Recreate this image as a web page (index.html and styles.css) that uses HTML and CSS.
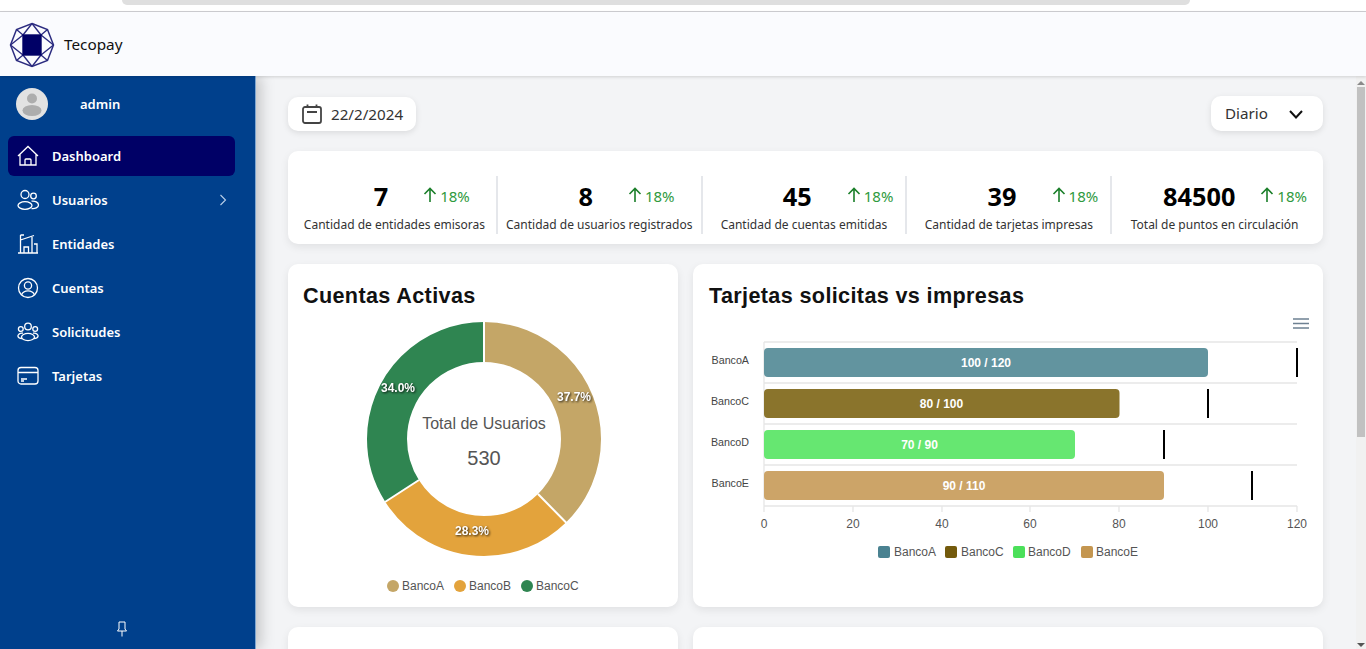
FILE: index.html
```html
<!DOCTYPE html>
<html lang="en">
<head>
  <meta charset="UTF-8" />
  <meta name="viewport" content="width=device-width, initial-scale=1.0" />
  <title>Tecopay</title>
  <link rel="stylesheet" href="styles.css">
</head>
<body>
  <div class="tabstrip"><div class="tabstrip-pill"></div></div>

  <header class="topbar">
    <svg class="logo" viewBox="0 0 46 46" fill="none" stroke="#2c2c80" stroke-width="1.4">
      <polygon points="23,1.5 38.5,7.5 44.5,23 38.5,38.5 23,44.5 7.5,38.5 1.5,23 7.5,7.5" stroke-width="1.5"/>
      <path d="M23 1.5 L14 13 M23 1.5 L32 13 M38.5 7.5 L32 13 M44.5 23 L32 13 M44.5 23 L32 33 M38.5 38.5 L32 33 M23 44.5 L32 33 M23 44.5 L14 33 M7.5 38.5 L14 33 M1.5 23 L14 33 M1.5 23 L14 13 M7.5 7.5 L14 13"/>
      <rect x="14" y="13" width="18" height="20" fill="#000066" stroke="#000066"/>
    </svg>
    <span class="brand">Tecopay</span>
  </header>

  <div class="layout">
    <aside class="sidebar">
      <div class="user">
        <svg class="avatar" viewBox="0 0 32 32">
          <circle cx="16" cy="16" r="16" fill="#e2e2e2"/>
          <circle cx="16" cy="10.5" r="5" fill="#adadad"/>
          <ellipse cx="16" cy="22.5" rx="9.5" ry="5.5" fill="#adadad"/>
        </svg>
        <span class="user-name">admin</span>
      </div>

      <nav class="nav">
        <a class="nav-item active" href="#">
          <svg class="nav-icon" viewBox="0 0 24 24"><path d="M2 12 L12 2.5 L22 12 M4 10 V21 H20 V10 M9 21 V16 Q9 15 10 15 H14 Q15 15 15 16 V21"/></svg>
          Dashboard
        </a>
        <a class="nav-item" href="#">
          <svg class="nav-icon" viewBox="0 0 24 24"><circle cx="9" cy="6.5" r="4"/><circle cx="17.5" cy="8" r="2.8"/><ellipse cx="9" cy="17.5" rx="7" ry="3.8"/><path d="M15.5 13.2 C19 12.5 22.5 14.5 22.5 17 C22.5 19.5 19 21 15.5 20.5"/></svg>
          Usuarios
          <svg class="nav-caret" viewBox="0 0 8 12"><path d="M1.5 1 L6.5 6 L1.5 11"/></svg>
        </a>
        <a class="nav-item" href="#">
          <svg class="nav-icon" viewBox="0 0 24 24"><path d="M2 21 H22 M4.5 21 V3 M4.5 3 H8 M4.5 8 L18 3.5 M16 5 V21 M8 21 V15 H12.5 V21 M18 12 H21 V21"/></svg>
          Entidades
        </a>
        <a class="nav-item" href="#">
          <svg class="nav-icon" viewBox="0 0 24 24"><circle cx="12" cy="12" r="9.5"/><circle cx="12" cy="9.5" r="3.6"/><path d="M5.5 19 Q7 14.8 12 14.8 Q17 14.8 18.5 19"/></svg>
          Cuentas
        </a>
        <a class="nav-item" href="#">
          <svg class="nav-icon" viewBox="0 0 24 24"><circle cx="12" cy="6.5" r="3.3"/><circle cx="4.8" cy="9" r="2.4"/><circle cx="19.2" cy="9" r="2.4"/><ellipse cx="12" cy="17" rx="6.5" ry="3.6"/><path d="M7 13.2 C3 12.8 1.5 15 2 16.5 C2.5 18 4 18.5 6 18.5 M17 13.2 C21 12.8 22.5 15 22 16.5 C21.5 18 20 18.5 18 18.5"/></svg>
          Solicitudes
        </a>
        <a class="nav-item" href="#">
          <svg class="nav-icon" viewBox="0 0 24 24"><rect x="2" y="3.5" width="20" height="16.5" rx="3"/><path d="M2 8.5 H22 M5 15 H11 M5 17 H8"/></svg>
          Tarjetas
        </a>
      </nav>

      <div class="pin">
        <svg viewBox="0 0 12 16" width="12" height="16" fill="none" stroke="#fff" stroke-width="1"><path d="M3 1 H9 V8 L10.5 10 H1.5 L3 8 Z M6 10 V15.5"/></svg>
      </div>
    </aside>

    <main class="main">
      <div class="toolbar">
        <div class="chip chip-date">
          <svg class="date-icon" viewBox="0 0 20 20" fill="none" stroke="#444" stroke-width="1.8"><rect x="1" y="3" width="18" height="16" rx="2"/><path d="M5.5 0.5 V4 M14.5 0.5 V4 M5 8 H15"/></svg>
          22/2/2024
        </div>
        <div class="chip chip-select">
          <span class="select-text">Diario</span>
          <svg class="select-icon" viewBox="0 0 14 9" fill="none" stroke="#111" stroke-width="2"><path d="M1 1 L7 7.5 L13 1"/></svg>
        </div>
      </div>

      <section class="card stats">
        <div class="stat">
          <div class="stat-row"><span class="stat-value">7</span><span class="delta"><svg class="delta-icon" viewBox="0 0 14 16"><path d="M7 15 V1.5 M1.5 7 L7 1.5 L12.5 7"/></svg>18%</span></div>
          <div class="stat-label">Cantidad de entidades emisoras</div>
        </div>
        <div class="stat">
          <div class="stat-row"><span class="stat-value">8</span><span class="delta"><svg class="delta-icon" viewBox="0 0 14 16"><path d="M7 15 V1.5 M1.5 7 L7 1.5 L12.5 7"/></svg>18%</span></div>
          <div class="stat-label">Cantidad de usuarios registrados</div>
        </div>
        <div class="stat stat-mid">
          <div class="stat-row"><span class="stat-value">45</span><span class="delta"><svg class="delta-icon" viewBox="0 0 14 16"><path d="M7 15 V1.5 M1.5 7 L7 1.5 L12.5 7"/></svg>18%</span></div>
          <div class="stat-label">Cantidad de cuentas emitidas</div>
        </div>
        <div class="stat stat-mid">
          <div class="stat-row"><span class="stat-value">39</span><span class="delta"><svg class="delta-icon" viewBox="0 0 14 16"><path d="M7 15 V1.5 M1.5 7 L7 1.5 L12.5 7"/></svg>18%</span></div>
          <div class="stat-label">Cantidad de tarjetas impresas</div>
        </div>
        <div class="stat stat-last">
          <div class="stat-row"><span class="stat-value">84500</span><span class="delta"><svg class="delta-icon" viewBox="0 0 14 16"><path d="M7 15 V1.5 M1.5 7 L7 1.5 L12.5 7"/></svg>18%</span></div>
          <div class="stat-label">Total de puntos en circulación</div>
        </div>
      </section>

      <section class="cards">
        <div class="card chart-card">
          <h2 class="chart-title">Cuentas Activas</h2>
          <svg class="chart" viewBox="0 0 390 299" width="390" height="299">
            <g fill="none" stroke-width="40" transform="rotate(-90 196 131)">
              <circle cx="196" cy="131" r="97" pathLength="100" stroke="#c4a667" stroke-dasharray="37.7 62.3"/>
              <circle cx="196" cy="131" r="97" pathLength="100" stroke="#e3a33c" stroke-dasharray="28.3 71.7" stroke-dashoffset="-37.7"/>
              <circle cx="196" cy="131" r="97" pathLength="100" stroke="#2f8551" stroke-dasharray="34 66" stroke-dashoffset="-66"/>
            </g>
            <path d="M196 14 V54 M250 186 L278.5 215 M131 172 L97 194" stroke="#fff" stroke-width="2"/>
            <g class="donut-label">
              <text x="286" y="93">37.7%</text>
              <text x="184" y="227">28.3%</text>
              <text x="110" y="84">34.0%</text>
            </g>
            <text class="donut-title" x="196" y="121">Total de Usuarios</text>
            <text class="donut-total" x="196" y="157">530</text>
            <circle cx="105" cy="278" r="6" fill="#c4a667"/>
            <text class="legend" x="114" y="282">BancoA</text>
            <circle cx="172" cy="278" r="6" fill="#e3a33c"/>
            <text class="legend" x="181" y="282">BancoB</text>
            <circle cx="239" cy="278" r="6" fill="#2f8551"/>
            <text class="legend" x="248" y="282">BancoC</text>
          </svg>
        </div>

        <div class="card chart-card">
          <h2 class="chart-title chart-title-wide">Tarjetas solicitas vs impresas</h2>
          <svg class="chart" viewBox="0 0 630 299" width="630" height="299">
            <path d="M600 11 H616 M600 15.5 H616 M600 20 H616" stroke="#6e8192" stroke-width="1.6"/>
            <path d="M71 34 H604 M71 75 H604 M71 116 H604 M71 157 H604 M71 198 H604 M71 34 V204 M160 198 V204 M249 198 V204 M337 198 V204 M426 198 V204 M515 198 V204 M604 198 V204" stroke="#e6e6e6" stroke-width="1.3" fill="none"/>
            <rect x="71" y="40" width="444" height="29" rx="4" fill="#62949f"/>
            <rect x="71" y="81" width="355.5" height="29" rx="4" fill="#8a742c"/>
            <rect x="71" y="122" width="311" height="29" rx="4" fill="#66e771"/>
            <rect x="71" y="163" width="400" height="29" rx="4" fill="#cca468"/>
            <path d="M604 40 V69 M515 81 V110 M471 122 V151 M559 163 V192" stroke="#000" stroke-width="2"/>
            <g class="bar-label">
              <text x="293" y="59">100 / 120</text>
              <text x="248.5" y="100">80 / 100</text>
              <text x="226.5" y="141">70 / 90</text>
              <text x="271" y="182">90 / 110</text>
            </g>
            <g class="bar-cat">
              <text x="56" y="56">BancoA</text>
              <text x="56" y="97">BancoC</text>
              <text x="56" y="138">BancoD</text>
              <text x="56" y="179">BancoE</text>
            </g>
            <g class="bar-tick">
              <text x="71" y="220">0</text>
              <text x="160" y="220">20</text>
              <text x="249" y="220">40</text>
              <text x="337" y="220">60</text>
              <text x="426" y="220">80</text>
              <text x="515" y="220">100</text>
              <text x="604" y="220">120</text>
            </g>
            <rect x="185" y="238" width="12" height="12" rx="2" fill="#4a8291"/>
            <text class="legend" x="201" y="248">BancoA</text>
            <rect x="252" y="238" width="12" height="12" rx="2" fill="#735a0c"/>
            <text class="legend" x="268" y="248">BancoC</text>
            <rect x="320" y="238" width="12" height="12" rx="2" fill="#4be05a"/>
            <text class="legend" x="335" y="248">BancoD</text>
            <rect x="388" y="238" width="12" height="12" rx="2" fill="#c49650"/>
            <text class="legend" x="403" y="248">BancoE</text>
          </svg>
        </div>

        <div class="card card-empty"></div>
        <div class="card card-empty"></div>
      </section>
    </main>

    <div class="scrollbar">
      <div class="scroll-up"></div>
      <div class="scroll-thumb"></div>
      <div class="scroll-down"></div>
    </div>
  </div>
</body>
</html>
```

FILE: styles.css
```css
* {
  box-sizing: border-box;
}
html, body {
  height: 100%;
}
body {
  margin: 0;
  overflow: hidden;
  font-family: "Noto Sans", "Open Sans", sans-serif;
  background: #f3f4f6;
  display: flex;
  flex-direction: column;
}

.tabstrip {
  height: 12px;
  background: #fff;
  border-bottom: 1px solid #cfcfd3;
  flex: none;
}
.tabstrip-pill {
  height: 5px;
  margin: 0 176px 0 122px;
  background: #dfdfdf;
  border-radius: 0 0 12px 12px;
}

.topbar {
  height: 64px;
  flex: none;
  display: flex;
  align-items: center;
  padding-left: 9px;
  gap: 9px;
  background: #fafbfe;
  box-shadow: 0 1px 3px rgba(0, 0, 0, 0.15);
  position: relative;
  z-index: 2;
}
.logo {
  width: 46px;
  height: 46px;
  margin-top: 2px;
}
.brand {
  font-size: 15.3px;
  color: #111;
}

.layout {
  flex: 1;
  min-height: 0;
  display: flex;
}

.sidebar {
  width: 256px;
  flex: none;
  background: #00408c;
  border-right: 1px solid #7fa6d0;
  box-shadow: 4px 0 14px rgba(0, 0, 0, 0.22);
  display: flex;
  flex-direction: column;
  position: relative;
  z-index: 1;
}
.user {
  display: flex;
  align-items: center;
  gap: 32px;
  padding: 12px 16px 0;
}
.avatar {
  width: 32px;
  height: 32px;
}
.user-name {
  font-size: 13px;
  font-weight: 600;
  color: #fff;
}
.nav {
  display: flex;
  flex-direction: column;
  gap: 4px;
  padding: 16px 20px 0 8px;
}
.nav-item {
  height: 40px;
  display: flex;
  align-items: center;
  gap: 12px;
  padding-left: 8px;
  border-radius: 6px;
  font-size: 13px;
  font-weight: 600;
  color: #fff;
  text-decoration: none;
}
.nav-item.active {
  background: #000066;
}
.nav-icon {
  width: 24px;
  height: 24px;
  fill: none;
  stroke: #fff;
  stroke-width: 1.3;
  flex: none;
}
.nav-caret {
  width: 8px;
  height: 12px;
  margin-left: auto;
  margin-right: 8px;
  fill: none;
  stroke: #b9cfe8;
  stroke-width: 1.1;
}
.pin {
  margin-top: auto;
  padding: 0 11px 12px 0;
  display: flex;
  justify-content: center;
}

.main {
  flex: 1;
  min-width: 0;
  overflow: hidden;
  padding: 20px 33px 0 32px;
}
.toolbar {
  display: flex;
  justify-content: space-between;
  align-items: center;
  height: 35px;
}
.chip {
  background: #fff;
  border-radius: 10px;
  box-shadow: 0 2px 6px rgba(0, 0, 0, 0.1);
  display: flex;
  align-items: center;
  font-size: 15.2px;
  color: #333;
}
.chip-date {
  width: 128px;
  height: 34px;
  padding-left: 14px;
  gap: 9px;
  margin-top: 1px;
}
.date-icon {
  width: 20px;
  height: 20px;
}
.chip-select {
  width: 112px;
  height: 35px;
  padding: 0 20px 0 14px;
  justify-content: space-between;
}
.select-text {
  margin-top: -2px;
}
.select-icon {
  width: 14px;
  height: 9px;
  margin-top: 1px;
}

.card {
  background: #fff;
  border-radius: 10px;
  box-shadow: 0 3px 8px rgba(0, 0, 0, 0.08);
}
.stats {
  margin-top: 20px;
  height: 93px;
  padding: 25px 6px 0 5px;
  display: grid;
  grid-template-columns: repeat(5, 1fr);
}
.stat {
  height: 58px;
  border-right: 2px solid #e5e7eb;
  text-align: center;
}
.stat:last-child {
  border-right: none;
}
.stat-row {
  display: flex;
  justify-content: flex-end;
  align-items: center;
  gap: 35px;
  height: 40px;
  padding-right: 26px;
}
.stat-mid .stat-row {
  padding-right: 12px;
}
.stat-last .stat-row {
  gap: 25px;
  padding-right: 10px;
}
.stat-value {
  font-size: 25.3px;
  font-weight: 700;
  color: #000;
}
.delta {
  display: flex;
  align-items: center;
  gap: 3px;
  font-size: 15px;
  color: #2f9a3e;
}
.delta-icon {
  width: 14px;
  height: 16px;
  margin-top: -3px;
  fill: none;
  stroke: #1b7f2a;
  stroke-width: 1.6;
}
.stat-label {
  font-size: 12px;
  color: #333;
  white-space: nowrap;
}

.cards {
  margin-top: 20px;
  display: grid;
  grid-template-columns: 390px 1fr;
  column-gap: 15px;
  row-gap: 20px;
}
.chart-card {
  height: 343px;
}
.card-empty {
  height: 200px;
}
.chart-title {
  margin: 0;
  padding: 19px 15px 0;
  height: 44px;
  font-family: "Liberation Sans", Arial, sans-serif;
  font-size: 21.6px;
  line-height: 26px;
  letter-spacing: 0.36px;
  font-weight: 700;
  color: #111;
}
.chart-title-wide {
  padding-left: 16px;
}
.chart {
  display: block;
}
.chart text {
  font-family: "Liberation Sans", Arial, sans-serif;
}
.donut-label text {
  font-size: 12px;
  font-weight: 700;
  fill: #fff;
  text-anchor: middle;
  filter: drop-shadow(1px 1px 1px rgba(0, 0, 0, 0.8));
}
.donut-title {
  font-size: 16px;
  fill: #555;
  text-anchor: middle;
}
.donut-total {
  font-size: 20px;
  fill: #555;
  text-anchor: middle;
}
.legend {
  font-size: 12px;
  fill: #555;
}
.bar-label text {
  font-size: 12px;
  font-weight: 700;
  fill: #fff;
  text-anchor: middle;
}
.bar-cat text {
  font-size: 10.7px;
  fill: #444;
  text-anchor: end;
}
.bar-tick text {
  font-size: 12px;
  fill: #555;
  text-anchor: middle;
}

.scrollbar {
  width: 10px;
  flex: none;
  background: #f1f1f1;
  display: flex;
  flex-direction: column;
  align-items: flex-start;
  position: relative;
}
.scroll-up {
  margin: 5px 0 0 1px;
  border: 4px solid transparent;
  border-top: none;
  border-bottom: 4px solid #8a8a8a;
}
.scroll-thumb {
  margin: 2px 0 0 1px;
  width: 8px;
  height: 350px;
  background: #c1c1c1;
}
.scroll-down {
  margin: auto 0 2px 1px;
  border: 4px solid transparent;
  border-bottom: none;
  border-top: 4px solid #555;
}
```
